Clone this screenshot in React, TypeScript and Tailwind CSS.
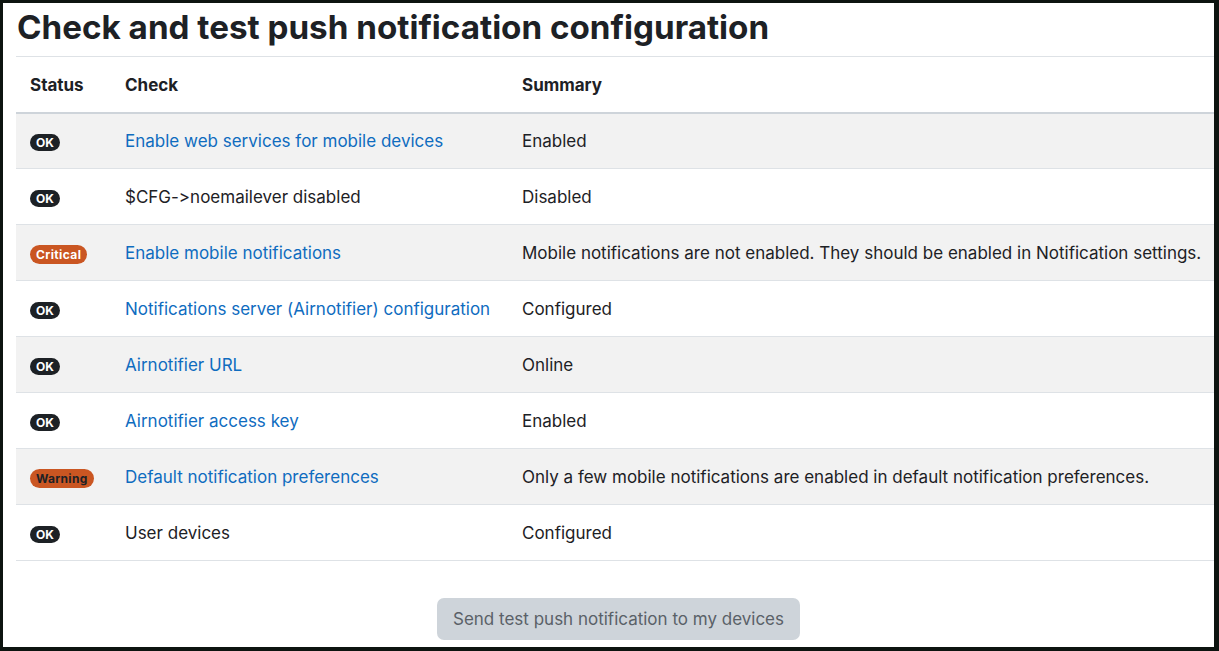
import React from 'react';

type Row = {
  status: 'ok' | 'critical' | 'warning';
  check: string;
  link: boolean;
  summary: string;
};

const rows: Row[] = [
  { status: 'ok', check: 'Enable web services for mobile devices', link: true, summary: 'Enabled' },
  { status: 'ok', check: '$CFG->noemailever disabled', link: false, summary: 'Disabled' },
  {
    status: 'critical',
    check: 'Enable mobile notifications',
    link: true,
    summary: 'Mobile notifications are not enabled. They should be enabled in Notification settings.',
  },
  { status: 'ok', check: 'Notifications server (Airnotifier) configuration', link: true, summary: 'Configured' },
  { status: 'ok', check: 'Airnotifier URL', link: true, summary: 'Online' },
  { status: 'ok', check: 'Airnotifier access key', link: true, summary: 'Enabled' },
  {
    status: 'warning',
    check: 'Default notification preferences',
    link: true,
    summary: 'Only a few mobile notifications are enabled in default notification preferences.',
  },
  { status: 'ok', check: 'User devices', link: false, summary: 'Configured' },
];

function Badge({ status }: { status: Row['status'] }) {
  if (status === 'critical') {
    return (
      <span className="inline-block rounded-full bg-[#ca5622] px-[6px] py-[2px] text-[12px] font-bold leading-[15px] tracking-[0.4px] text-white">
        Critical
      </span>
    );
  }
  if (status === 'warning') {
    return (
      <span className="inline-block rounded-full bg-[#ca5622] px-[6px] py-[2px] text-[12px] font-bold leading-[15px] tracking-[0.3px] text-[#1d2125]">
        Warning
      </span>
    );
  }
  return (
    <span className="inline-block rounded-full bg-[#1d2125] px-[6px] py-[2px] text-[12px] font-bold leading-[13px] text-white">
      OK
    </span>
  );
}

export default function App() {
  return (
    <div className="h-[651px] w-[1219px] overflow-hidden border-t-[3px] border-r-[5px] border-b-[4px] border-l-[3px] border-[#0d1410] bg-white font-['Inter',sans-serif] text-[#1d2125] [font-feature-settings:'calt'_0,'liga'_0]">
      <div className="w-[1218px] pl-[13px]">
        <h1 className="pt-[4px] pb-[9px] pl-[1px] text-[33.2px] font-bold leading-[40px]">
          Check and test push notification configuration
        </h1>
        <table className="w-full table-fixed border-collapse text-[17px]">
          <colgroup>
            <col className="w-[109px]" />
            <col className="w-[397px]" />
            <col />
          </colgroup>
          <thead>
            <tr className="h-[56px] border-t border-b-2 border-t-[#dee2e6] border-b-[#ced4da]">
              <th className="pt-[2px] pl-[14px] text-left font-bold">Status</th>
              <th className="pt-[2px] text-left font-bold">Check</th>
              <th className="pt-[2px] text-left font-bold">Summary</th>
            </tr>
          </thead>
          <tbody>
            {rows.map((r, i) => (
              <tr
                key={i}
                className={`h-[56px] border-b border-[#dee2e6] ${i % 2 === 0 ? 'bg-[#f2f2f2]' : 'bg-white'}`}
              >
                <td className="pt-[2px] pl-[14px]">
                  <Badge status={r.status} />
                </td>
                <td className={`pt-[2px] whitespace-nowrap ${r.link ? 'text-[#0f6cbf]' : ''}`}>{r.check}</td>
                <td className="pt-[2px] whitespace-nowrap">{r.summary}</td>
              </tr>
            ))}
          </tbody>
        </table>
        <div className="flex justify-center pt-[37px]">
          <button className="h-[42px] w-[363px] rounded-[7px] bg-[#ced4da] pt-[2px] text-[17px] text-[#5a6168]">
            Send test push notification to my devices
          </button>
        </div>
      </div>
    </div>
  );
}
